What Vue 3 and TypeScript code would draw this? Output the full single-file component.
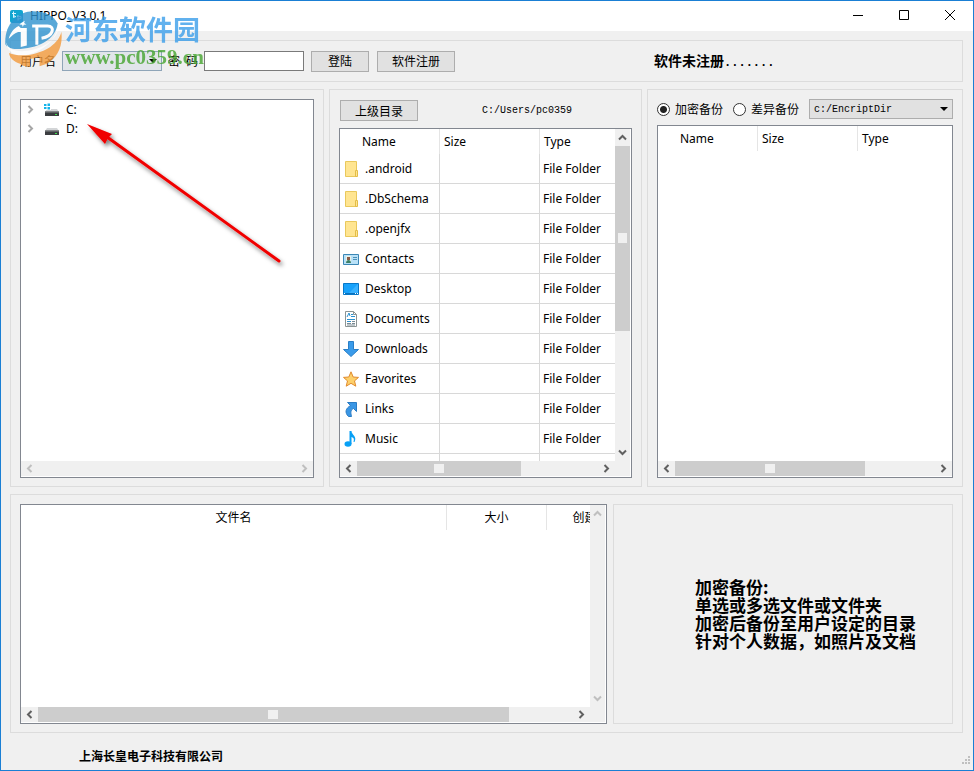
<script setup lang="ts">
import { h, ref, type FunctionalComponent } from 'vue'

type IconName = 'folder' | 'contacts' | 'desktop' | 'documents' | 'downloads' | 'favorites' | 'links' | 'music'

interface Entry {
  name: string
  icon: IconName
}

const entries: Entry[] = [
  { name: '.android', icon: 'folder' },
  { name: '.DbSchema', icon: 'folder' },
  { name: '.openjfx', icon: 'folder' },
  { name: 'Contacts', icon: 'contacts' },
  { name: 'Desktop', icon: 'desktop' },
  { name: 'Documents', icon: 'documents' },
  { name: 'Downloads', icon: 'downloads' },
  { name: 'Favorites', icon: 'favorites' },
  { name: 'Links', icon: 'links' },
  { name: 'Music', icon: 'music' },
]

const drives = [
  { label: 'C:', system: true },
  { label: 'D:', system: false },
]

const notes = ['加密备份:', '单选或多选文件或文件夹', '加密后备份至用户设定的目录', '针对个人数据，如照片及文档']

const mode = ref('encrypt')
const user = ref('')
const password = ref('')
const target = ref('c:/EncriptDir')

// Scroll bar with two step buttons; `size` is the thumb length in percent, 0 means nothing to scroll.
const ScrollBar: FunctionalComponent<{ vertical?: boolean; size: number }> = (props) => {
  const arrow = (d: string) =>
    h('button', { type: 'button', class: 'sb-step', disabled: props.size === 0 }, [
      h('svg', { viewBox: '0 0 9 9', width: 9, height: 9 }, [h('path', { d })]),
    ])
  const length = `${props.size}%`
  const thumb = props.size
    ? h('div', { class: 'sb-thumb', style: props.vertical ? { height: length } : { width: length } }, [
        h('span', { class: 'sb-grip' }),
      ])
    : null
  return h('div', { class: ['sb', props.vertical ? 'sb-v' : 'sb-h'] }, [
    arrow(props.vertical ? 'M1 6.5 4.5 3 8 6.5' : 'M6.5 1 3 4.5 6.5 8'),
    h('div', { class: 'sb-track' }, [thumb]),
    arrow(props.vertical ? 'M1 2.5 4.5 6 8 2.5' : 'M2.5 1 6 4.5 2.5 8'),
  ])
}
ScrollBar.props = { vertical: Boolean, size: { type: Number, required: true } }
</script>

<template>
  <div class="window">
    <header class="titlebar">
      <svg class="app-icon" viewBox="0 0 13 13" width="13" height="13">
        <rect width="13" height="13" rx="2" fill="#12a5d0" />
        <path d="M2 3.5h4M3.5 1.5v6l2-1M3 5l3 2M7.500 6.500h3.500v2l-3 .500M8 5.500v5" fill="none" stroke="#d9f5ff" stroke-width="1" />
      </svg>
      <h1>HIPPO_V3.0.1</h1>
      <div class="caption-buttons">
        <button type="button"><svg viewBox="0 0 12 12" width="12" height="12"><path d="M1 5.500h10" /></svg></button>
        <button type="button"><svg viewBox="0 0 12 12" width="12" height="12"><path d="M1.500 .500h9v9h-9z" /></svg></button>
        <button type="button"><svg viewBox="0 0 12 12" width="12" height="12"><path d="M1 0l10 10M11 0L1 10" /></svg></button>
      </div>
    </header>

    <main class="content">
      <form class="group login" @submit.prevent>
        <label for="user">用户名</label>
        <span class="combo combo-user">
          <select id="user" v-model="user"><option value=""></option></select>
          <svg viewBox="0 0 8 4" width="8" height="4"><path d="M0 0h8L4 4z" /></svg>
        </span>
        <label for="password" class="password-label"><span>密</span><span>码</span></label>
        <input id="password" v-model="password" type="password" class="text-box" />
        <button type="submit" class="push login-button">登陆</button>
        <button type="button" class="push wide">软件注册</button>
        <p class="register-state">软件未注册<span>.......</span></p>
      </form>

      <div class="browsers">
        <section class="group">
          <div class="frame">
            <ul class="tree">
              <li v-for="drive in drives" :key="drive.label">
                <button type="button" class="expander">
                  <svg viewBox="0 0 7 9" width="7" height="9"><path d="M1.500 1 5 4.500 1.500 8" /></svg>
                </button>
                <svg viewBox="0 0 16 14" width="16" height="14">
                  <path d="M3 6h10l2 3H1z" fill="#d3d5d7" />
                  <path d="M1 8.500h14V13H1z" fill="#3b3d40" />
                  <path d="M1 8.500h14v1H1z" fill="#85888b" />
                  <path d="M11 11h2v1h-2z" fill="#3fe04c" />
                  <g v-if="drive.system">
                    <path d="M0 0h7v7H0z" fill="#fff" />
                    <path d="M0 1h2.500v2H0zM3.500.500H6V3H3.500zM0 4h2.500v2H0zM3.500 4H6v2.500H3.500z" fill="#12b3ea" />
                  </g>
                </svg>
                <span>{{ drive.label }}</span>
              </li>
            </ul>
            <ScrollBar :size="0" />
          </div>
        </section>

        <section class="group">
          <div class="tools path-tools">
            <button type="button" class="push wide">上级目录</button>
            <output class="path">C:/Users/pc0359</output>
          </div>
          <div class="frame with-vertical">
            <div class="viewport">
              <table class="files">
                <thead>
                  <tr><th>Name</th><th>Size</th><th>Type</th></tr>
                </thead>
                <tbody>
                  <tr v-for="entry in entries" :key="entry.name">
                    <td>
                      <span class="file">
                        <svg viewBox="0 0 16 16" width="16" height="16">
                          <g v-if="entry.icon === 'folder'">
                            <path d="M2.500.500h11v15h-11z" fill="#ffe591" stroke="#e9c85c" />
                            <path d="M12.500 9.500h2v6h-2z" fill="#ffe591" stroke="#e3bd48" />
                          </g>
                          <g v-else-if="entry.icon === 'contacts'">
                            <path d="M.500 3.500h15v10H.500z" fill="#b9e1f7" stroke="#3b87b5" />
                            <path d="M3 5h5v7H3z" fill="#e9f2ea" />
                            <path d="M4 6h3v3H4z" fill="#8a5a44" />
                            <path d="M3 12c0-4 5-4 5 0z" fill="#3d8068" />
                            <path d="M10 6.500h4M10 8.500h4" stroke="#4a90b8" />
                          </g>
                          <g v-else-if="entry.icon === 'desktop'">
                            <path d="M.500 2.500h15v11H.500z" fill="#18a2fb" stroke="#0878c8" />
                            <path d="M15 3v9H6z" fill="#3ab2ff" />
                            <path d="M1 12.500h14" stroke="#0872bd" />
                            <path d="M1 12.500h1M12 12.500h1M14 12.500h1" stroke="#fff" />
                          </g>
                          <g v-else-if="entry.icon === 'documents'">
                            <path d="M2.500.500h8l3 3v12h-11z" fill="#fff" stroke="#8c9494" />
                            <path d="M10.500.500v3h3" fill="none" stroke="#8c9494" />
                            <path d="M4 6l2-4 1 3M8 3.500h2M8 5.500h4M4 8.500h8M4 10.500h4" fill="none" stroke="#2b91d0" />
                            <path d="M9 10.500h3M4 12.500h4M9 12.500h3M4 14h8" stroke="#7b8b94" />
                          </g>
                          <path v-else-if="entry.icon === 'downloads'" d="M5.500.500h5v8h5L8 15.500.500 8.500h5z" fill="#3a9bea" stroke="#2a7fc7" />
                          <path v-else-if="entry.icon === 'favorites'" d="M8 .800l2.200 5.200 5.300.400-4 3.500 1.300 5.300L8 12.300l-4.800 2.900 1.300-5.300-4-3.500L5.800 6z" fill="#fdd06a" stroke="#e08a2e" />
                          <path v-else-if="entry.icon === 'links'" d="M4.500 1.500h9v9l-3-3c-3 1.500-3 4-2 8H5.500c-4-4-3-8 2-11z" fill="#3a96e4" stroke="#2a7cc5" />
                          <g v-else fill="#08a0f5">
                            <ellipse cx="5" cy="13" rx="3.500" ry="2.700" />
                            <path d="M6.500 0h2c0 4 6 5 3 11h-1c1-4 0-4-2-5v7h-2z" />
                          </g>
                        </svg>
                        {{ entry.name }}
                      </span>
                    </td>
                    <td></td>
                    <td>File Folder</td>
                  </tr>
                  <tr><td></td><td></td><td></td></tr>
                </tbody>
              </table>
            </div>
            <ScrollBar vertical :size="62" />
            <ScrollBar :size="68" />
            <div class="corner"></div>
          </div>
        </section>

        <section class="group">
          <div class="tools backup-tools">
            <label><input v-model="mode" type="radio" name="mode" value="encrypt" />加密备份</label>
            <label><input v-model="mode" type="radio" name="mode" value="diff" />差异备份</label>
            <span class="combo combo-target">
              <select v-model="target" aria-label="c:/EncriptDir"><option>c:/EncriptDir</option></select>
              <svg viewBox="0 0 8 4" width="8" height="4"><path d="M0 0h8L4 4z" /></svg>
            </span>
          </div>
          <div class="frame">
            <div class="viewport">
              <table class="files">
                <thead>
                  <tr><th>Name</th><th>Size</th><th>Type</th></tr>
                </thead>
              </table>
            </div>
            <ScrollBar :size="73" />
          </div>
        </section>
      </div>

      <section class="group summary">
        <div class="frame with-vertical">
          <div class="viewport">
            <table class="files backups">
              <thead>
                <tr><th class="col-name">文件名</th><th>大小</th><th>创建时间</th></tr>
              </thead>
            </table>
          </div>
          <ScrollBar vertical :size="0" />
          <ScrollBar :size="88" />
          <div class="corner"></div>
        </div>
        <div class="notes">
          <p><span v-for="line in notes" :key="line">{{ line }}</span></p>
        </div>
      </section>
    </main>

    <footer class="status">
      <span>上海长皇电子科技有限公司</span>
      <svg viewBox="0 0 8 8" width="8" height="8">
        <path d="M6 0h2v2H6zM3 3h2v2H3zM6 3h2v2H6zM0 6h2v2H0zM3 6h2v2H3zM6 6h2v2H6z" />
      </svg>
    </footer>

    <div class="watermark">
      <svg viewBox="15 33 170 170" width="57" height="57">
        <path d="M16 132C12 76 50 34 100 34c34 0 60 14 72 36-6 50-62 76-122 76-18 0-28-4-34-14z" fill="#2f93cf" />
        <path d="M16 118c4 36 44 40 84 30 46-12 80-42 74-80-2 46-38 80-86 94-38 10-66 0-72-44z" fill="#fff" />
        <path d="M183 95c6 44-14 80-43 95l-22 8v-28l-28 6v24l-22-4-8-6c-18-5-32-18-33-32 33 14 83 7 123-18 20-14 30-30 33-45z" fill="#f39a3c" />
        <path d="M26 116c6-18 14-30 30-38l6 6h18v52l-18 4V96h-8c-12 4-18 12-28 20z" fill="#fff" />
        <path d="M96 78h46c24 0 18 30-18 36M110 80v54" fill="none" stroke="#fff" stroke-width="9" />
        <path d="M74 62l-2 7 7 4-8 1-3 7-2-7-8-1 6-5z" fill="#fff" />
      </svg>
      <div class="watermark-text">
        <strong>河东软件园</strong>
        <span>www.pc0359.cn</span>
      </div>
    </div>

    <svg class="pointer" viewBox="0 0 204 150" width="204" height="150">
      <defs>
        <filter id="pointer-shadow" x="-10%" y="-10%" width="120%" height="120%">
          <feDropShadow dx="2" dy="3" stdDeviation="2" flood-color="#000" flood-opacity="0.5" />
        </filter>
      </defs>
      <g filter="url(#pointer-shadow)" fill="#f00000">
        <path d="M0 0l25 10-4 4-3 6z" />
        <path d="M20 13L192 137" stroke="#f00000" stroke-width="3" stroke-linecap="round" />
      </g>
    </svg>
  </div>
</template>

<style>
body {
  margin: 0;
}

.sb {
  display: flex;
  background: #f0f0f0;
}

.sb-h {
  height: 15px;
  margin-bottom: 1px;
}

.sb-v {
  flex-direction: column;
  width: 15px;
}

.sb-step {
  display: grid;
  place-items: center;
  flex: none;
  width: 17px;
  height: 15px;
  padding: 0;
  border: 0;
  background: none;
}

.sb-v .sb-step {
  width: 15px;
  height: 17px;
}

.sb-step path {
  fill: none;
  stroke: #606060;
  stroke-width: 2;
}

.sb-step:disabled path {
  stroke: #bfbfbf;
}

.sb-track {
  flex: 1;
  min-width: 0;
  min-height: 0;
}

.sb-thumb {
  display: grid;
  place-items: center;
  height: 100%;
  background: #cdcdcd;
}

.sb-grip {
  width: 10px;
  height: 9px;
  background: #f0f0f0;
}

.sb-v .sb-grip {
  width: 9px;
  height: 10px;
}
</style>

<style scoped>
.window {
  position: relative;
  display: flex;
  flex-direction: column;
  box-sizing: border-box;
  height: 100vh;
  min-height: 480px;
  border: 1px solid #1a7fd4;
  overflow: hidden;
  background: #f0f0f0;
  color: #000;
  font: 12px/16px "Noto Sans", "Noto Sans CJK SC", sans-serif;
}

p,
ul {
  margin: 0;
  padding: 0;
}

button,
input,
select {
  box-sizing: border-box;
  margin: 0;
  border-radius: 0;
  color: inherit;
  font: inherit;
}

.titlebar {
  display: flex;
  align-items: center;
  flex: none;
  height: 30px;
  padding-left: 9px;
  background: #fff;
}

.titlebar h1 {
  margin: 0 0 0 7px;
  font-size: 12px;
  font-weight: 400;
}

.caption-buttons {
  display: flex;
  margin-left: auto;
}

.caption-buttons button {
  display: grid;
  place-items: center;
  width: 46px;
  height: 30px;
  padding: 0;
  border: 0;
  background: none;
}

.caption-buttons path {
  fill: none;
  stroke: #000;
}

.content {
  display: grid;
  grid-template-rows: 42px minmax(0, 398fr) minmax(0, 239fr);
  gap: 7px;
  flex: 1;
  min-height: 0;
  padding: 9px 10px 0 9px;
}

.group {
  box-sizing: border-box;
  display: flex;
  flex-direction: column;
  min-width: 0;
  min-height: 0;
  padding: 9px 9px 8px;
  border: 1px solid #dcdcdc;
}

.login {
  flex-direction: row;
  align-items: center;
  padding-top: 0;
  padding-bottom: 0;
  font-family: "Noto Sans CJK SC", sans-serif;
}

.combo {
  display: grid;
  align-items: center;
  height: 20px;
}

.combo select {
  grid-area: 1 / 1;
  width: 100%;
  height: 20px;
  padding: 0 4px;
  border: 1px solid #adadad;
  background: #e1e1e1;
  appearance: none;
}

.combo svg {
  grid-area: 1 / 1;
  justify-self: end;
  margin-right: 5px;
  pointer-events: none;
}

.combo-user {
  width: 100px;
  margin-left: 6px;
}

.combo-user select {
  border-color: #8fa5b8;
  background: #e1e5ea;
}

.password-label {
  display: flex;
  gap: 6px;
  margin-left: 6px;
}

.text-box {
  width: 100px;
  height: 20px;
  margin-left: 6px;
  border: 1px solid #7a7a7a;
  background: #fff;
}

.push {
  height: 21px;
  padding: 0;
  border: 1px solid #adadad;
  background: #e1e1e1;
  font-family: "Noto Sans CJK SC", sans-serif;
  line-height: 16px;
}

.login-button {
  width: 58px;
  margin: 0 8px 0 7px;
}

.wide {
  width: 78px;
}

.register-state {
  margin: 0 auto 0 199px;
  font-size: 14px;
  font-weight: 700;
}

.register-state span {
  font-family: "Liberation Mono", monospace;
  font-size: 12px;
}

.browsers {
  display: grid;
  grid-template-columns: minmax(0, 314fr) minmax(0, 313fr) minmax(0, 316fr);
  gap: 5px;
  min-height: 0;
}

.frame {
  display: grid;
  grid-template-rows: minmax(0, 1fr) auto;
  grid-template-columns: minmax(0, 1fr);
  flex: 1;
  min-width: 0;
  min-height: 0;
  border: 1px solid #828790;
  background: #fff;
}

.with-vertical {
  grid-template-columns: minmax(0, 1fr) 15px;
  padding-right: 1px;
}

.corner {
  margin-bottom: 1px;
  background: #f0f0f0;
}

.viewport {
  min-height: 0;
  overflow: hidden;
}

.tree {
  list-style: none;
}

.tree li {
  display: flex;
  align-items: center;
  height: 19px;
}

.tree li > span {
  margin-left: 6px;
}

.expander {
  display: grid;
  place-items: center;
  width: 19px;
  height: 19px;
  margin-right: 4px;
  padding: 0;
  border: 0;
  background: none;
}

.expander path {
  fill: none;
  stroke: #a6a6a6;
  stroke-width: 2;
}

.tools {
  display: flex;
  align-items: center;
}

.path-tools {
  height: 23px;
  margin-bottom: 6px;
  padding-left: 1px;
}

.path {
  flex: 1;
  padding-left: 4px;
  text-align: center;
  font: 10px/16px "Liberation Mono", monospace;
}

.backup-tools {
  height: 20px;
  margin-bottom: 6px;
  font-family: "Noto Sans CJK SC", sans-serif;
}

.backup-tools label {
  display: flex;
  align-items: center;
  gap: 5px;
  margin-right: 10px;
}

.backup-tools input {
  width: 13px;
  height: 13px;
  border: 1px solid #333;
  border-radius: 50%;
  background: #fff;
  appearance: none;
}

.backup-tools input:checked {
  background: radial-gradient(circle, #222 0 3px, #fff 4px);
}

.combo-target {
  flex: 1;
}

.combo-target select {
  padding-top: 2px;
  font: 10px/16px "Liberation Mono", monospace;
}

.files {
  width: 300px;
  border-collapse: separate;
  border-spacing: 0;
  table-layout: fixed;
}

.files th {
  box-sizing: border-box;
  height: 25px;
  padding: 0 4px;
  border-right: 1px solid #e5e5e5;
  text-align: left;
  font-weight: 400;
}

.files th:first-child {
  padding-left: 22px;
}

.files th:last-child {
  border-right-color: transparent;
}

.files td {
  box-sizing: border-box;
  height: 30px;
  padding: 0 3px;
  border-right: 1px solid #d8d8d8;
  border-bottom: 1px solid #d8d8d8;
  white-space: nowrap;
}

.files.backups {
  width: 626px;
}

.backups th,
.backups th:first-child {
  padding: 0;
  text-align: center;
}

.backups .col-name {
  width: 426px;
}

.file {
  display: flex;
  align-items: center;
  gap: 6px;
}

.summary {
  display: grid;
  grid-template-columns: minmax(0, 19fr) minmax(0, 11fr);
  gap: 6px;
}

.notes {
  display: grid;
  align-items: center;
  padding-left: 81px;
  border: 1px solid #dcdcdc;
}

.notes p {
  font: 700 17px/18px "Noto Sans CJK SC", sans-serif;
}

.notes span {
  display: block;
  white-space: nowrap;
}

.status {
  display: flex;
  align-items: center;
  justify-content: space-between;
  flex: none;
  height: 37px;
  padding: 0 3px 0 78px;
  font-family: "Noto Sans CJK SC", sans-serif;
  font-weight: 700;
}

.status span {
  padding-top: 8px;
}

.status svg {
  align-self: end;
  margin-bottom: 6px;
  fill: #bfbfbf;
}

.watermark {
  position: absolute;
  top: 10px;
  left: 4px;
  display: flex;
  gap: 3px;
  opacity: 0.8;
  pointer-events: none;
}

.watermark-text {
  display: flex;
  flex-direction: column;
}

.watermark-text strong {
  color: #3a9eea;
  font: 700 27px/36px "Noto Sans CJK SC", sans-serif;
}

.watermark-text span {
  color: #45a52f;
  font: 700 21px/20px "Liberation Serif", serif;
}

.pointer {
  position: absolute;
  top: 123px;
  left: 86px;
  overflow: visible;
  pointer-events: none;
}
</style>
